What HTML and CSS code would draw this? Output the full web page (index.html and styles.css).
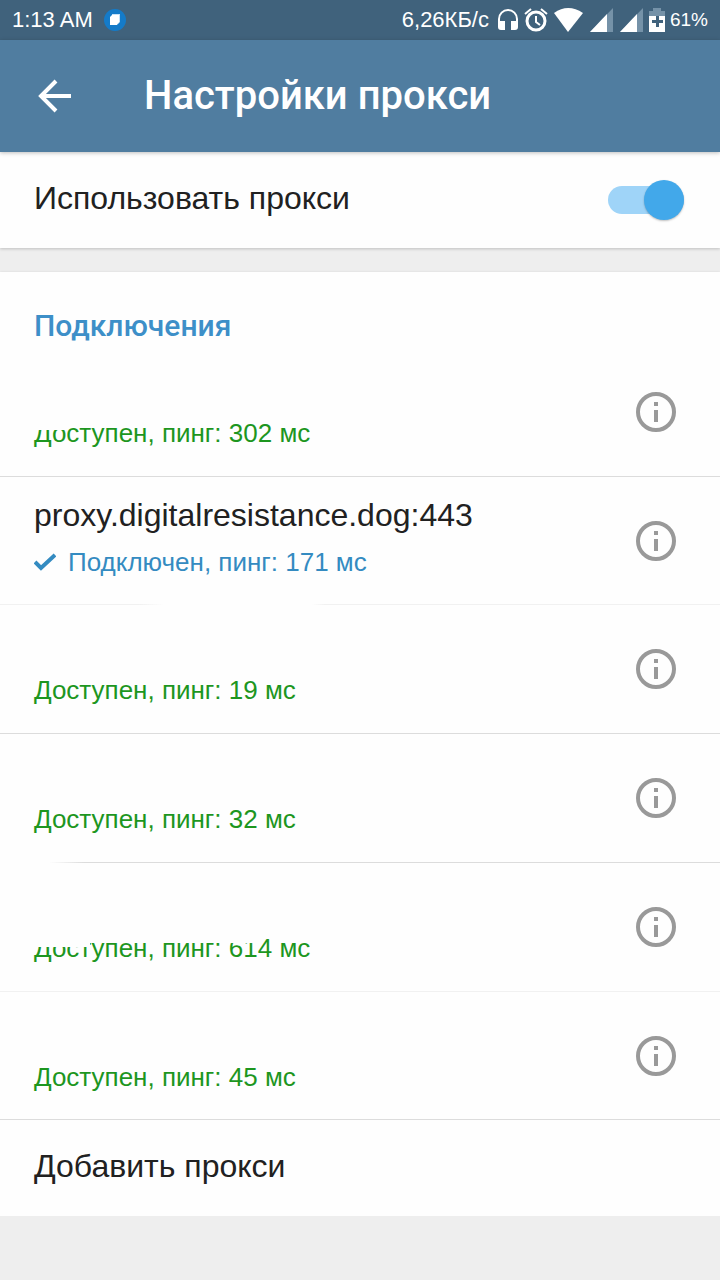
FILE: index.html
```html
<!DOCTYPE html>
<html lang="ru">
<head>
    <meta charset="utf-8">
    <meta name="viewport" content="width=device-width">
    <title>Настройки прокси</title>
    <link rel="stylesheet" href="styles.css">
</head>
<body>
<svg class="sprite" aria-hidden="true">
    <symbol id="info" viewBox="0 0 40 40">
        <circle cx="20" cy="20" r="18" fill="none" stroke="currentColor" stroke-width="4"/>
        <path fill="currentColor" d="M18 10h4v4h-4zM18 18h4v12h-4z"/>
    </symbol>
    <symbol id="signal" viewBox="0 0 24 24">
        <path fill="#7592a8" d="M23 0v24H0z"/>
        <path fill="currentColor" d="M17 6v18H0z"/>
    </symbol>
</svg>

<div class="status-bar">
    <span class="time">1:13 AM</span>
    <svg class="notice" width="24" height="24" viewBox="0 0 24 24">
        <circle cx="12" cy="12" r="11" fill="#147bc9"/>
        <path fill="#c5e1f6" d="M9 6h8v8l-2 2V9H9z"/>
        <path fill="#fff" d="M9 7h7v7l-2 3H7V9z"/>
    </svg>
    <span class="speed">6,26КБ/с</span>
    <svg width="22" height="24" viewBox="0 0 22 24">
        <path fill="none" stroke="currentColor" stroke-width="2" d="M2 16v-5a9 9 0 0 1 18 0v5"/>
        <path fill="currentColor" d="M1 13h7v9H4q-3 0-3-3zM14 13h7v6q0 3-3 3h-4z"/>
    </svg>
    <svg class="alarm" width="24" height="24" viewBox="0 0 24 24">
        <circle cx="12" cy="13" r="9" fill="none" stroke="currentColor" stroke-width="3"/>
        <path fill="none" stroke="currentColor" stroke-width="2" d="M1 6l6-5M23 6l-6-5M12 8v6l4 3"/>
    </svg>
    <svg class="wifi" width="30" height="24" viewBox="0 0 30 24">
        <path fill="currentColor" d="M0 5q14-10 29 0L14 24z"/>
    </svg>
    <svg class="signal" width="24" height="24"><use href="#signal"/></svg>
    <svg class="signal" width="24" height="24"><use href="#signal"/></svg>
    <svg class="battery" width="16" height="24" viewBox="0 0 16 24">
        <path fill="#7592a8" d="M4 0h8v3h4v6H0V3h4z"/>
        <path fill="currentColor" d="M0 8h16v16H0z"/>
        <path fill="#40627c" d="M7 8h3v4h4v3h-4v4H7v-4H3v-3h4z"/>
    </svg>
    <span class="percent">61%</span>
</div>

<header class="app-bar">
    <button class="back" type="button" aria-label="Назад">
        <svg width="34" height="34" viewBox="0 0 34 34">
            <path fill="none" stroke="currentColor" stroke-width="4" d="M33 17H4M18 2L3 17l15 15"/>
        </svg>
    </button>
    <h1>Настройки прокси</h1>
</header>

<main>
    <section class="card use-proxy">
        <label for="use-proxy">Использовать прокси</label>
        <input class="switch" type="checkbox" id="use-proxy" checked>
    </section>

    <section class="card">
        <h2>Подключения</h2>
        <ul class="proxies">
            <li class="proxy">
                <div class="details">
                    <span class="name"></span>
                    <span class="status cut-short">Доступен, пинг: 302 мс</span>
                </div>
                <button class="info" type="button" aria-label="Подробнее"><svg><use href="#info"/></svg></button>
            </li>
            <li class="proxy line-gap">
                <div class="details">
                    <span class="name">proxy.digitalresistance.dog:443</span>
                    <span class="status connected">
                        <svg width="22" height="18" viewBox="0 0 22 18">
                            <path fill="none" stroke="currentColor" stroke-width="4" d="M1 9l6 6L21 2"/>
                        </svg>
                        Подключен, пинг: 171 мс
                    </span>
                </div>
                <button class="info" type="button" aria-label="Подробнее"><svg><use href="#info"/></svg></button>
            </li>
            <li class="proxy">
                <div class="details">
                    <span class="name"></span>
                    <span class="status">Доступен, пинг: 19 мс</span>
                </div>
                <button class="info" type="button" aria-label="Подробнее"><svg><use href="#info"/></svg></button>
            </li>
            <li class="proxy line-start">
                <div class="details">
                    <span class="name"></span>
                    <span class="status">Доступен, пинг: 32 мс</span>
                </div>
                <button class="info" type="button" aria-label="Подробнее"><svg><use href="#info"/></svg></button>
            </li>
            <li class="proxy line-faint">
                <div class="details">
                    <span class="name"></span>
                    <span class="status cut-long">Доступен, пинг: 614 мс</span>
                </div>
                <button class="info" type="button" aria-label="Подробнее"><svg><use href="#info"/></svg></button>
            </li>
            <li class="proxy">
                <div class="details">
                    <span class="name"></span>
                    <span class="status">Доступен, пинг: 45 мс</span>
                </div>
                <button class="info" type="button" aria-label="Подробнее"><svg><use href="#info"/></svg></button>
            </li>
        </ul>
        <button class="add" type="button">Добавить прокси</button>
    </section>
</main>
</body>
</html>
```
FILE: styles.css
```css
* {
    box-sizing: border-box;
}

body {
    margin: 0;
    background: #eee;
    color: #212121;
    font-family: "Liberation Sans", Arial, sans-serif;
    font-size: 32px;
    line-height: 36px;
}

button {
    padding: 0;
    border: 0;
    background: none;
    color: inherit;
    font: inherit;
    cursor: pointer;
}

svg {
    display: block;
    flex: none;
}

.sprite {
    position: absolute;
    width: 0;
    height: 0;
}

/* Android status bar */
.status-bar {
    display: flex;
    align-items: center;
    height: 40px;
    padding: 0 12px;
    background: #40627c;
    color: #fff;
    font-size: 22px;
    line-height: 24px;
}

.notice {
    margin-left: 10px;
}

.speed {
    margin-left: auto;
    margin-right: 8px;
}

.alarm {
    margin-left: 5px;
}

.wifi {
    margin-left: 6px;
}

.signal {
    margin-left: 6px;
}

.battery {
    margin: 0 5px;
}

.percent {
    font-size: 19px;
}

/* Title bar */
.app-bar {
    position: relative;
    display: flex;
    align-items: center;
    gap: 72px;
    height: 112px;
    padding: 0 38px;
    background: #507da0;
    box-shadow: 0 1px 4px rgba(0, 0, 0, .25);
    color: #fff;
}

h1, h2 {
    margin: 0;
    font-family: Roboto, sans-serif;
    font-weight: 500;
}

h1 {
    font-size: 40px;
    line-height: 48px;
}

/* White blocks */
.card {
    background: #fefefe;
    box-shadow: 0 1px 3px rgba(0, 0, 0, .2);
}

.use-proxy {
    display: flex;
    align-items: center;
    justify-content: space-between;
    margin-bottom: 24px;
    padding: 28px 36px 32px 34px;
}

.switch {
    display: flex;
    align-items: center;
    justify-content: flex-end;
    appearance: none;
    width: 76px;
    height: 28px;
    margin: 4px 0 0;
    border-radius: 14px;
    background: #9fd4f8;
}

.switch::before {
    content: "";
    width: 40px;
    height: 40px;
    border-radius: 50%;
    background: #42a8ea;
    box-shadow: 0 1px 2px rgba(0, 0, 0, .25);
}

.switch:not(:checked) {
    justify-content: flex-start;
    background: #ccc;
}

h2 {
    padding: 36px 34px 4px;
    color: #3d8fc8;
    font-size: 30px;
}

/* Proxy list */
.proxies {
    margin: 0;
    padding: 0;
    list-style: none;
}

.proxy {
    display: flex;
    align-items: center;
    justify-content: space-between;
    min-height: 129px;
    padding: 16px 44px 16px 34px;
    border-bottom: 1px solid #dcdcdc;
}

.proxy:nth-child(4n + 2) {
    min-height: 128px;
}

.details {
    display: flex;
    flex-direction: column;
    gap: 12px;
    padding-bottom: 6px;
}

.name {
    min-height: 36px;
}

.status {
    position: relative;
    display: flex;
    align-items: center;
    gap: 12px;
    color: #1d961f;
    font-size: 26px;
    line-height: 34px;
}

.connected {
    color: #348bc1;
}

.info {
    color: #999;
}

.info svg {
    width: 40px;
    height: 40px;
}

/* Patches that hide the addresses, they also cover a bit of the text below */
.cut-short::before,
.cut-long::before,
.cut-long::after {
    content: "";
    position: absolute;
    top: 0;
    left: 0;
    width: 32px;
    height: 14px;
    background: #fefefe;
}

.cut-long::before {
    width: 56px;
    height: 16px;
}

.cut-long::after {
    width: 222px;
    height: 12px;
}

/* Dividers wiped out by the same patches */
.line-gap {
    border-image: linear-gradient(to right, #f1f1f1 140px, #fefefe 165px, #fefefe 312px, #f1f1f1 325px) 1;
}

.line-start {
    border-image: linear-gradient(to right, #fefefe 50px, #dcdcdc 85px) 1;
}

.line-faint {
    border-bottom-color: #f1f1f1;
}

.add {
    display: block;
    width: 100%;
    padding: 28px 34px 32px;
    text-align: left;
}
```
